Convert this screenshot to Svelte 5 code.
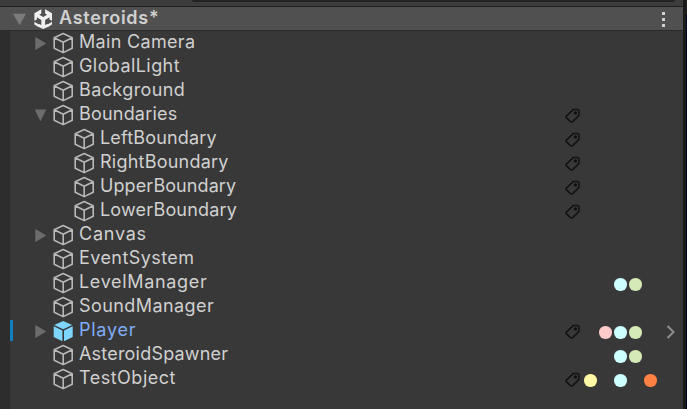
<script>
  const rows = [
    { name: 'Main Camera', spacing: 0.32, arrow: 'right' },
    { name: 'GlobalLight', spacing: 0.42 },
    { name: 'Background', spacing: 0.4 },
    { name: 'Boundaries', spacing: 0.2, arrow: 'down', tag: true },
    { name: 'LeftBoundary', spacing: 0.17, child: true, tag: true },
    { name: 'RightBoundary', spacing: 0.23, child: true, tag: true },
    { name: 'UpperBoundary', spacing: 0.08, child: true, tag: true },
    { name: 'LowerBoundary', spacing: 0.17, child: true, tag: true },
    { name: 'Canvas', spacing: 0.75, arrow: 'right' },
    { name: 'EventSystem', spacing: 0.42 },
    { name: 'LevelManager', spacing: 0.67, dots: ['', '', 'cyan', 'green', ''] },
    { name: 'SoundManager', spacing: 0.42 },
    { name: 'Player', spacing: 0.75, arrow: 'right', prefab: true, tag: true, dots: ['', 'pink', 'cyan', 'green', ''] },
    { name: 'AsteroidSpawner', spacing: 0.2, dots: ['', '', 'cyan', 'green', ''] },
    { name: 'TestObject', spacing: 0.5, tag: true, dots: ['yellow', '', 'cyan', '', 'orange'] }
  ];
</script>

<div class="window">
  <div class="panel">
    <div class="toolbar"><div class="search"></div></div>
    <div class="scene">
      <svg class="fold" width="13" height="13" viewBox="0 0 13 13"><path d="M0 .7h13L6.5 12.3z" fill="#7b7b7b" /></svg>
      <svg class="unity" width="20" height="20" viewBox="0 0 20 20">
        <g fill="#f0f0f0">
          <path d="M8.300.3v4.200L6.300 5.700l3.900 2.300 3.900-2.300-2-1.200V.3l6.900 4v7.500l-2.500-1.400V8.300l-4.400 2.600v5.200l2.100-1.200 3.300 1.900-7.300 3.100-7.300-3.100 3.300-1.900 2.100 1.200v-5.200L3.900 8.300v2.100l-2.500 1.400V4.300z" />
          <path d="M1.400 12.800l2.800 1.600 1.900 1.200-1.900 1.500-2.800-1.600zM19 12.800l-2.800 1.600-1.900 1.200 1.900 1.500 2.800-1.600z" />
        </g>
      </svg>
      <span class="title">Asteroids*</span>
      <span class="menu"><i></i><i></i><i></i></span>
    </div>
    <div class="body">
      <div class="gutter"></div>
      <div class="tree">
        {#each rows as row}
          <div class="row" class:child={row.child} class:prefab={row.prefab}>
            <span class="arrow">
              {#if row.arrow === 'right'}
                <svg width="12" height="13" viewBox="0 0 12 13"><path d="M.3 0v13L11.300 6.500z" fill="#6c6c6c" /></svg>
              {:else if row.arrow === 'down'}
                <svg width="12" height="13" viewBox="0 0 12 13"><path d="M-.3.6h11.600L5.500 12.200z" fill="#6c6c6c" /></svg>
              {/if}
            </span>
            <svg class="cube" width="20" height="22" viewBox="0 0 20 22">
              {#if row.prefab}
                <path d="M10.200 1l9 4-9 4.300-9-4.300z" fill="#7fd6fd" />
                <path d="M.7 6.300l8.700 4.200v10.800L.7 17zM19.700 6.300L11 10.500v10.800l8.700-4.300z" fill="#7fd6fd" />
              {:else}
                <path d="M10.200 1.600l9 4.100v10.600l-9 4.300-9-4.300V5.700zM1.200 5.700l9 4.500 9-4.500M10.200 10.200v10.400" fill="none" stroke="#b8b8b8" stroke-width="1.600" stroke-linejoin="round" />
              {/if}
            </svg>
            <span class="name" style:letter-spacing="{row.spacing}px">{row.name}</span>
            <span class="tag">
              {#if row.tag}
                <svg width="16" height="16" viewBox="0 0 16 16">
                  <path d="M8.300 1.500h4.200q1.500 0 1.500 1.500v4.200L7.600 13.700q-1 1-2 0L1.500 9.900q-1-1 0-2z" fill="none" stroke="#101010" stroke-width="1.500" stroke-linejoin="round" />
                  <circle cx="10.400" cy="5" r="1.700" fill="#101010" />
                </svg>
              {/if}
            </span>
            <span class="slots">
              {#each row.dots ?? [] as dot}
                <span class="slot">{#if dot}<i class={dot}></i>{/if}</span>
              {/each}
            </span>
            <span class="open">
              {#if row.prefab}
                <svg width="10" height="14" viewBox="0 0 10 14"><path d="M1.500 1l6 6-6 6" fill="none" stroke="#8d8d8d" stroke-width="2" /></svg>
              {/if}
            </span>
          </div>
        {/each}
      </div>
    </div>
  </div>
  <div class="edge"></div>
  <div class="backdrop"></div>
</div>

<style>
  :global(body) { background: #383838; }
  .window { display: flex; width: 687px; height: 409px; overflow: hidden; font-family: Inter, sans-serif; font-size: 18px; color: #d0d0d0; }
  .panel { width: 683px; display: flex; flex-direction: column; background: #383838; }
  .toolbar { height: 6px; flex: none; background: #3c3c3c; border-bottom: 1px solid #202020; }
  .search { margin-left: 192px; width: 483px; height: 2px; background: #242424; border-radius: 0 0 3px 3px; }
  .scene { height: 23px; flex: none; display: flex; align-items: center; padding-left: 13px; background: #505050; border-bottom: 1px solid #2b2b2b; }
  .fold { margin-top: 2px; }
  .unity { margin-left: 7px; }
  .title { margin-left: 6px; font-weight: 600; letter-spacing: .75px; line-height: 22px; margin-top: -1px; }
  .menu { margin-left: auto; margin-right: 18px; margin-top: 1px; display: flex; flex-direction: column; gap: 3px; }
  .menu i { width: 3px; height: 3px; background: #d0d0d0; }
  .body { flex: 1; display: flex; min-height: 0; }
  .gutter { width: 10px; background: #2d2d2d; }
  .tree { flex: 1; }
  .row { height: 24px; box-sizing: border-box; display: flex; align-items: center; padding-left: 25px; }
  .child { padding-left: 46px; }
  .prefab { background: linear-gradient(#0f7fbf, #0f7fbf) 0 1px / 3px 21px no-repeat; }
  .arrow { width: 12px; height: 13px; display: flex; }
  .arrow svg { overflow: visible; }
  .arrow svg, .cube { flex: none; }
  .cube { margin-left: 6px; }
  .name { margin-left: 6px; line-height: 22px; height: 24px; white-space: nowrap; }
  .prefab .name { color: #80acf5; }
  .tag { margin-left: auto; width: 18px; height: 16px; margin-top: 2px; display: flex; }
  .slots { width: 75px; display: flex; margin-top: 3px; }
  .slot { width: 15px; height: 13px; display: flex; justify-content: center; }
  .slot i { width: 12.500px; height: 12.500px; border-radius: 50%; }
  .cyan { background: #ceffff; }
  .green { background: #d5e8b8; }
  .pink { background: #ffcaca; }
  .yellow { background: #fff8a5; }
  .orange { background: #ff8144; }
  .open { width: 17px; margin-left: 8px; height: 14px; margin-top: 2px; display: flex; }
  .edge { width: 3px; background: #1b1b1b; }
  .backdrop { width: 1px; background: linear-gradient(#202020 14px, #050528 14px); }
</style>
